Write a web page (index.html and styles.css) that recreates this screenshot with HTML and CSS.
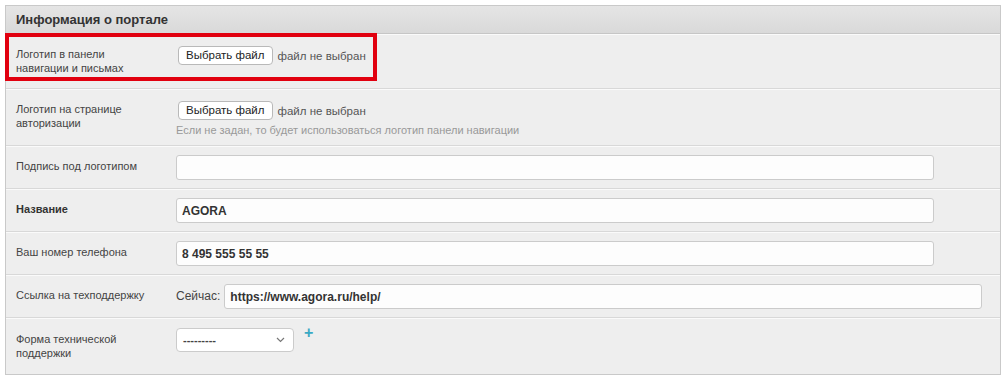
FILE: index.html
```html
<!DOCTYPE html>
<html lang="ru">

<head>
    <meta charset="UTF-8">
    <meta name="viewport" content="width=device-width, initial-scale=1.0">
    <title>Информация о портале</title>
    <link rel="stylesheet" href="styles.css">
</head>

<body>

    <div class="panel">
        <div class="panel-head">Информация о портале</div>

        <div class="row row-file row-marked">
            <div class="label">Логотип в панели<br>навигации и письмах</div>
            <div class="value">
                <div class="file">
                    <span class="file-btn">Выбрать файл</span>
                    <span class="file-name">файл не выбран</span>
                </div>
            </div>
            <span class="mark"></span>
        </div>

        <div class="row row-file">
            <div class="label">Логотип на странице<br>авторизации</div>
            <div class="value">
                <div class="file">
                    <span class="file-btn">Выбрать файл</span>
                    <span class="file-name">файл не выбран</span>
                </div>
                <p class="hint">Если не задан, то будет использоваться логотип панели навигации</p>
            </div>
        </div>

        <div class="row">
            <div class="label">Подпись под логотипом</div>
            <div class="value"><input class="field" type="text" value=""></div>
        </div>

        <div class="row">
            <div class="label label-bold">Название</div>
            <div class="value"><input class="field" type="text" value="AGORA"></div>
        </div>

        <div class="row">
            <div class="label">Ваш номер телефона</div>
            <div class="value"><input class="field" type="text" value="8 495 555 55 55"></div>
        </div>

        <div class="row">
            <div class="label">Ссылка на техподдержку</div>
            <div class="value value-inline">
                <span class="prefix">Сейчас:</span>
                <input class="field" type="text" value="https://www.agora.ru/help/">
            </div>
        </div>

        <div class="row row-select">
            <div class="label label-low">Форма технической<br>поддержки</div>
            <div class="value value-inline">
                <div class="select">
                    <span>---------</span>
                    <svg width="9" height="6" viewBox="0 0 9 6"><path d="M1 1 L4.5 4.5 L8 1" fill="none" stroke="#777" stroke-width="1.2"/></svg>
                </div>
                <span class="add">+</span>
            </div>
        </div>
    </div>

</body>

</html>
```

FILE: styles.css
```css
* {
    margin: 0;
    padding: 0;
    box-sizing: border-box;
}

body {
    background: #fff;
    font-family: "Liberation Sans", Arial, sans-serif;
    color: #333;
}

.panel {
    width: 996px;
    margin: 5px 0 0 5px;
    border: 1px solid #c9c9c9;
    background-color: #eee;
}

.panel-head {
    height: 28px;
    padding: 5px 10px 0;
    font-size: 13px;
    line-height: 17px;
    font-weight: bold;
    color: #333;
    background: linear-gradient(#e5e5e5, #d9d9d9);
    border-bottom: 1px solid #c6c6c6;
}

.row {
    display: flex;
    position: relative;
    padding: 8px 0;
    border-top: 1px solid #fafafa;
    border-bottom: 1px solid #d8d8d8;
}

.row:last-child {
    border-bottom: 0;
}

.label {
    width: 170px;
    flex-shrink: 0;
    padding: 4px 10px 0;
    font-size: 11px;
    line-height: 14px;
    color: #444;
}

.label-bold {
    font-weight: bold;
    color: #333;
}

.label-low {
    padding-top: 5px;
}

.value {
    font-size: 12px;
}

.value-inline {
    display: flex;
    align-items: flex-start;
}

.row-file .value {
    min-height: 37px;
}

.file {
    display: flex;
    align-items: center;
    margin: 3px 0 0 2px;
}

.file-btn {
    display: block;
    height: 19px;
    padding: 0 7px;
    line-height: 17px;
    font-size: 11.5px;
    color: #222;
    background: #fff;
    border: 1px solid #b9b9b9;
    border-radius: 4px;
}

.file-name {
    margin-left: 5px;
    font-size: 11.5px;
    color: #555;
}

.hint {
    margin-top: 4px;
    font-size: 11px;
    line-height: 13px;
    color: #999;
}

.field {
    display: block;
    width: 758px;
    height: 25px;
    padding: 0 5px;
    font-family: "Liberation Sans", Arial, sans-serif;
    font-size: 12px;
    font-weight: bold;
    color: #333;
    background: #fdfdfd;
    border: 1px solid #cbcbcb;
    border-radius: 3px;
    outline: none;
}

.prefix {
    margin-right: 4px;
    line-height: 25px;
    font-size: 12px;
    color: #444;
}

.row-select .value {
    min-height: 39px;
}

.select {
    display: flex;
    justify-content: space-between;
    align-items: center;
    width: 118px;
    height: 24px;
    margin-top: 1px;
    padding: 0 8px 0 6px;
    font-size: 11px;
    font-weight: bold;
    color: #444;
    background: #fff;
    border: 1px solid #cbcbcb;
    border-radius: 4px;
}

.add {
    margin: -2px 0 0 10px;
    font-size: 16px;
    line-height: 16px;
    font-weight: bold;
    color: #3aa9c4;
}

.mark {
    position: absolute;
    left: -1px;
    top: -2px;
    width: 372px;
    height: 48px;
    border: 4px solid #e1000f;
}
```
